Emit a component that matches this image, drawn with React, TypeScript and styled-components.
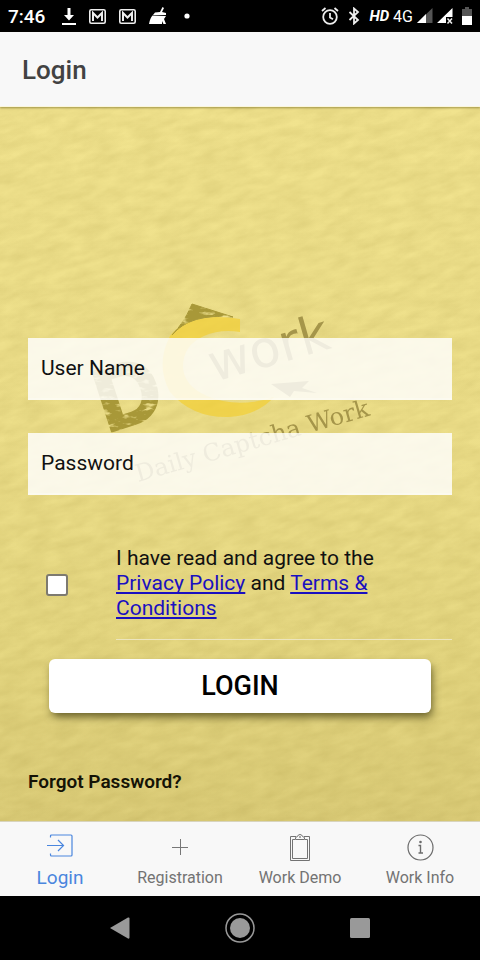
import React from "react";
import styled, { createGlobalStyle, css } from "styled-components";

const GlobalStyle = createGlobalStyle`
  * { box-sizing: border-box; }
  body { margin: 0; font-family: Roboto, "Liberation Sans", sans-serif; color: #111; }
`;

const Page = styled.div`
  min-height: 100vh;
  display: flex;
  flex-direction: column;
  background: #000;
`;

const StatusBar = styled.div`
  height: 32px;
  padding: 0 8px;
  display: flex;
  align-items: center;
  justify-content: space-between;
  background: #000;
  color: #fff;
`;

const StatusGroup = styled.div<{ $gap: number }>`
  display: flex;
  align-items: center;
  gap: ${(p) => p.$gap}px;
  svg { display: block; }
`;

const Clock = styled.time`
  font-size: 19px;
  font-weight: 500;
`;

const Network = styled.span<{ $strong?: boolean }>`
  font-size: 16px;
  ${(p) => p.$strong && css`font-size: 15px; font-weight: 700; font-style: italic;`}
`;

const Header = styled.header`
  height: 75px;
  padding: 0 22px;
  display: flex;
  align-items: center;
  background: #f8f8f8;
  border-bottom: 1px solid #fbf6dc;
  box-shadow: 0 1px 2px rgba(90, 80, 10, 0.5);
  z-index: 2;
`;

const Title = styled.h1`
  margin: 0;
  font-size: 26px;
  line-height: 30px;
  padding-top: 2px;
  font-weight: 500;
  color: #424242;
`;

const Content = styled.main`
  flex: 1;
  position: relative;
  isolation: isolate;
  padding: 231px 28px 20px;
  display: flex;
  flex-direction: column;
  background: linear-gradient(#f1e38e, #eddf8a 45%, #e6d882 75%, #dccd79);
`;

const Backdrop = styled.svg`
  position: absolute;
  inset: 0;
  width: 100%;
  height: 100%;
  z-index: -1;
`;

const Form = styled.form`
  display: flex;
  flex-direction: column;
`;

const Fields = styled.div`
  display: flex;
  flex-direction: column;
  gap: 33px;
`;

const Field = styled.input`
  width: 100%;
  height: 62px;
  padding: 0 13px;
  border: 0;
  border-bottom: 2px solid rgba(255, 255, 255, 0.3);
  border-radius: 0;
  background: rgba(255, 255, 255, 0.82);
  font: 400 21px Roboto, "Liberation Sans", sans-serif;
  color: #111;
  outline: none;
  &::placeholder { color: #111; opacity: 1; }
`;

const Agreement = styled.div`
  margin-top: 51px;
  display: flex;
  align-items: center;
`;

const Tick = styled.input`
  appearance: none;
  flex: none;
  width: 22px;
  height: 22px;
  margin: 0 48px 17px 18px;
  border: 2px solid #7d7a70;
  border-radius: 3px;
  background: #fff;
  &:checked { background: #488aff; }
`;

const AgreementText = styled.label`
  flex: 1;
  padding: 0 14px 18px 0;
  border-bottom: 1px solid #ece5bf;
  font-size: 21px;
  line-height: 25px;
`;

const DocLink = styled.a`
  color: #1a10c0;
  text-decoration: underline;
  text-decoration-skip-ink: none;
`;

const Submit = styled.button`
  height: 54px;
  margin: 19px 21px 0;
  border: 0;
  border-radius: 6px;
  background: #fff;
  box-shadow: 2px 5px 8px -1px rgba(50, 45, 5, 0.7);
  font: 500 27px Roboto, "Liberation Sans", sans-serif;
  color: #000;
`;

const Forgot = styled.a`
  align-self: flex-start;
  margin-top: 58px;
  font-size: 19px;
  line-height: 22px;
  font-weight: 600;
  color: #151306;
  text-decoration: none;
`;

const Tabs = styled.nav`
  height: 75px;
  display: grid;
  grid-template-columns: repeat(4, 1fr);
  background: #f8f8f8;
  border-top: 1px solid #d8d4bd;
`;

const Tab = styled.a<{ $active?: boolean }>`
  display: flex;
  flex-direction: column;
  align-items: center;
  justify-content: flex-end;
  gap: ${(p) => (p.$active ? 10 : 6)}px;
  padding-bottom: 7px;
  font-size: ${(p) => (p.$active ? 19 : 16)}px;
  line-height: 22px;
  white-space: nowrap;
  text-decoration: none;
  color: ${(p) => (p.$active ? "#4a86de" : "#737373")};
  svg { display: block; }
`;

const SystemNav = styled.nav`
  height: 64px;
  display: flex;
  align-items: center;
  justify-content: center;
  gap: 90px;
`;

const SystemButton = styled.button`
  width: 30px;
  height: 30px;
  padding: 0;
  border: 0;
  background: none;
  display: grid;
  place-items: center;
`;

const DownloadIcon = () => (
  <svg width="14" height="17" viewBox="0 0 14 17" fill="#fff">
    <path d="M5.500 0h3v7H12l-5 5.500L2 7h3.500zM0 15h14v2H0z" />
  </svg>
);

const MailIcon = () => (
  <svg width="17" height="15" viewBox="0 0 17 15" fill="none">
    <rect x=".8" y=".8" width="15.400" height="13.400" rx="1.500" fill="#000" stroke="#eee" strokeWidth="1.600" />
    <path d="M4 12V4l4.500 4.500L13 4v8" stroke="#eee" strokeWidth="2" />
  </svg>
);

const BroomIcon = () => (
  <svg width="18" height="18" viewBox="0 0 18 18" fill="#fff">
    <path d="M13.500 0l1.500 1-2 4 4 1v2L4 8l2-2.500 5-.5zM3.500 8.500L17 9l-2 3 2 5h-2.500l-1.500-3v3H0q1-6 3.500-8.500z" />
  </svg>
);

const AlarmIcon = () => (
  <svg width="18" height="18" viewBox="0 0 18 18" fill="none" stroke="#eee" strokeWidth="1.800">
    <circle cx="9" cy="10" r="6.800" />
    <path d="M9 6v4.500l3 1.800M1 4l3.500-3M17 4l-3.500-3" />
  </svg>
);

const BluetoothIcon = () => (
  <svg width="12" height="18" viewBox="0 0 12 18" fill="none" stroke="#eee" strokeWidth="1.800">
    <path d="M1.500 5l8.500 8-4 3.500v-15L10 5l-8.500 8" />
  </svg>
);

const SignalIcon = ({ off }: { off?: boolean }) => (
  <svg width="16" height="16" viewBox="0 0 16 16">
    {off ? (
      <>
        <path d="M15.500 0v9H9v6H0z" fill="#fff" />
        <path d="M10.500 10.500l4.500 5M15 10.500l-4.500 5" stroke="#eee" strokeWidth="1.500" />
      </>
    ) : (
      <>
        <path d="M15.500 0v15H0z" fill="#555" />
        <path d="M9 6v9H0z" fill="#fff" />
      </>
    )}
  </svg>
);

const BatteryIcon = () => (
  <svg width="10" height="18" viewBox="0 0 10 18">
    <path d="M3 0h4v2h3v8H0V2h3z" fill="#555" />
    <path d="M0 9h10v9H0z" fill="#fff" />
  </svg>
);

const LogInIcon = () => (
  <svg width="26" height="23" viewBox="0 0 26 23" fill="none" stroke="#4a86de" strokeWidth="1.200">
    <path d="M3.500 3.500V2q0-1 1-1H24q1 0 1 1v19q0 1-1 1H4.500q-1 0-1-1v-1.500M0 11.500h16M11 6l5.500 5.500L11 17" />
  </svg>
);

const AddIcon = () => (
  <svg width="26" height="26" viewBox="0 0 26 26" stroke="#777" strokeWidth="1">
    <path d="M13.500 4v16M5 12.500h16" />
  </svg>
);

const ClipboardIcon = () => (
  <svg width="20" height="27" viewBox="0 0 20 27" fill="none" stroke="#737373" strokeWidth="1">
    <path d="M6 2.500H.5v24h19v-24H14M5 5.500H2.500v19h15v-19H15" />
    <path d="M5.500 5.500V3.500l2-1Q8 .5 10 .5t2.500 2l2 1v2z" />
    <circle cx="10" cy="3" r=".5" />
  </svg>
);

const InfoIcon = () => (
  <svg width="27" height="27" viewBox="0 0 27 27" fill="none" stroke="#6b6b6b">
    <circle cx="13.500" cy="13.500" r="12.500" strokeWidth="1.200" />
    <path d="M11.500 11.500h2v7.500M11.500 19h4.500" strokeWidth="1.400" />
    <circle cx="13.500" cy="8" r="1.300" fill="#6b6b6b" stroke="none" />
  </svg>
);

const PaperBackdrop = () => (
  <Backdrop aria-hidden="true">
    <defs>
      <filter id="paper" x="0" y="0" width="100%" height="100%" colorInterpolationFilters="sRGB">
        <feTurbulence type="fractalNoise" baseFrequency="0.04 0.11" numOctaves="4" seed="8" />
        <feColorMatrix values="0 0 0 0 0.42  0 0 0 0 0.34  0 0 0 0 0.02  1 0 0 0 -0.2" />
      </filter>
      <filter id="worn" x="-5%" y="-5%" width="110%" height="110%">
        <feTurbulence type="fractalNoise" baseFrequency="0.09 0.25" numOctaves="3" seed="4" result="n" />
        <feColorMatrix in="n" values="0 0 0 0 0  0 0 0 0 0  0 0 0 0 0  -4 0 0 0 3.200" result="m" />
        <feComposite in="SourceGraphic" in2="m" operator="in" />
      </filter>
    </defs>
    <g transform="rotate(-14)">
      <rect x="-60%" y="-20%" width="200%" height="160%" filter="url(#paper)" opacity="0.15" />
    </g>
    <svg x="50%" overflow="visible">
      <g transform="translate(-240 -107)">
        <path
          d="M240 319Q190 311 170 336Q155 365 170 392Q192 418 229 417Q258 415 274 397Q237 409 207 396Q184 386 183 367Q183 345 204 336Q220 329 240 332Z"
          fill="#f2cf33"
          opacity="0.7"
        />
        <g fill="#a89838" stroke="#a89838" filter="url(#worn)">
          <path d="M192 304L233 317Q190 313 172 335Q184 323 192 304Z" strokeWidth="1" />
          <text transform="translate(107 432) rotate(-18)" fontFamily="Liberation Sans" fontWeight="700" fontSize="88" strokeWidth="4">D</text>
        </g>
        <g fill="#9a8a40" opacity="0.85">
          <text transform="translate(214 382) rotate(-16)" fontFamily="DejaVu Sans" fontSize="51">work</text>
          <path d="M271 384L309 381L302 388L317 393L294 391L290 397Z" />
          <text transform="translate(138 482) rotate(-16)" fontFamily="DejaVu Serif" fontSize="24">Daily Captcha Work</text>
        </g>
      </g>
    </svg>
  </Backdrop>
);

export default function App() {
  return (
    <Page>
      <GlobalStyle />
      <StatusBar>
        <StatusGroup $gap={17}>
          <Clock>7:46</Clock>
          <StatusGroup $gap={13}>
            <DownloadIcon />
            <MailIcon />
            <MailIcon />
            <BroomIcon />
          </StatusGroup>
          <svg width="6" height="6" viewBox="0 0 6 6"><circle cx="3" cy="3" r="2.600" fill="#fff" /></svg>
        </StatusGroup>
        <StatusGroup $gap={4}>
          <StatusGroup $gap={9}>
            <AlarmIcon />
            <BluetoothIcon />
            <Network $strong>HD</Network>
          </StatusGroup>
          <Network>4G</Network>
          <SignalIcon />
          <StatusGroup $gap={9}>
            <SignalIcon off />
            <BatteryIcon />
          </StatusGroup>
        </StatusGroup>
      </StatusBar>
      <Header>
        <Title>Login</Title>
      </Header>
      <Content>
        <PaperBackdrop />
        <Form onSubmit={(e) => e.preventDefault()}>
          <Fields>
            <Field type="text" placeholder="User Name" aria-label="User Name" />
            <Field type="password" placeholder="Password" aria-label="Password" />
          </Fields>
          <Agreement>
            <Tick type="checkbox" id="agree" />
            <AgreementText htmlFor="agree">
              I have read and agree to the <DocLink href="#privacy">Privacy Policy</DocLink> and{" "}
              <DocLink href="#terms">Terms &amp; Conditions</DocLink>
            </AgreementText>
          </Agreement>
          <Submit type="submit">LOGIN</Submit>
        </Form>
        <Forgot href="#forgot">Forgot Password?</Forgot>
      </Content>
      <Tabs>
        <Tab href="#login" $active aria-current="page"><LogInIcon />Login</Tab>
        <Tab href="#registration"><AddIcon />Registration</Tab>
        <Tab href="#demo"><ClipboardIcon />Work Demo</Tab>
        <Tab href="#info"><InfoIcon />Work Info</Tab>
      </Tabs>
      <SystemNav aria-label="System">
        <SystemButton aria-label="Back">
          <svg width="20" height="22" viewBox="0 0 20 22"><path d="M0 11L18 .5q1.500-.5 1.500 1v19q0 1.500-1.500 1z" fill="#999" /></svg>
        </SystemButton>
        <SystemButton aria-label="Home">
          <svg width="30" height="30" viewBox="0 0 30 30">
            <circle cx="15" cy="15" r="14" fill="none" stroke="#999" strokeWidth="1.500" />
            <circle cx="15" cy="15" r="10" fill="#999" />
          </svg>
        </SystemButton>
        <SystemButton aria-label="Recents">
          <svg width="20" height="20" viewBox="0 0 20 20"><rect width="20" height="20" rx="1.500" fill="#999" /></svg>
        </SystemButton>
      </SystemNav>
    </Page>
  );
}
